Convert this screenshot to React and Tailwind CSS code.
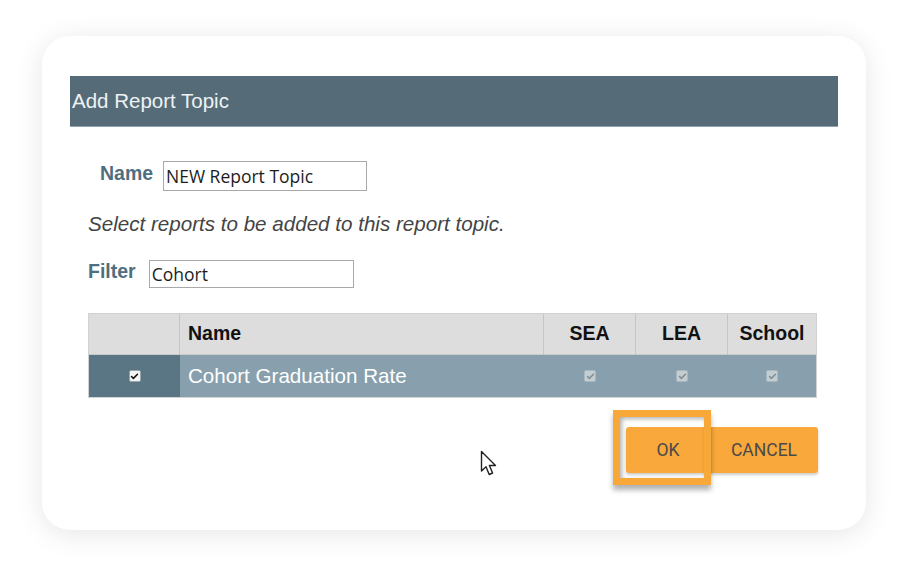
import { Check } from "lucide-react";

function Box({ on = true, disabled = false }) {
  // small native-looking checkbox
  return (
    <span
      className={`inline-flex w-[12px] h-[12px] items-center justify-center rounded-[2px] border ${
        disabled ? "bg-[#c3ced3] border-[#aab8be]" : "bg-[#f4f4f4] border-[#9aa6ac]"
      }`}
    >
      {on && (
        <Check
          strokeWidth={4}
          className={`w-[9px] h-[9px] ${disabled ? "text-[#7f8d94]" : "text-[#111]"}`}
        />
      )}
    </span>
  );
}

function Cursor() {
  return (
    <svg width="20" height="28" viewBox="0 0 20 28" className="absolute left-[480px] top-[450px]">
      <path
        d="M1.5 1.5 L1.5 21 L6 16.8 L9.2 24.5 L12.6 23 L9.4 15.5 L15.5 15.5 Z"
        fill="#fff"
        stroke="#222"
        strokeWidth="1.4"
        strokeLinejoin="round"
      />
    </svg>
  );
}

export default function App() {
  const cols = ["SEA", "LEA", "School"];

  return (
    <div className="w-[908px] h-[578px] bg-white pt-[36px] px-[42px] relative font-['Liberation_Sans',Arial,sans-serif]">
      <div className="h-[494px] bg-white rounded-[28px] shadow-[0_4px_28px_rgba(0,0,0,0.1)] pt-[40px] px-[28px]">
        {/* title bar */}
        <div className="h-[51px] bg-[#556c78] border-b border-[#8fa3ac] flex items-center pl-[2px]">
          <span className="text-[20.5px] text-[#eef2f4]">Add Report Topic</span>
        </div>

        <div className="pl-[18px] pr-[20px]">
          <div className="mt-[34px] pl-[12px] flex items-center gap-[8px]">
            <span className="w-[55px] text-[19.5px] font-bold text-[#4f6e7e] -mt-[4px]">Name</span>
            <div className="w-[204px] h-[30px] border border-[#a9a9a9] flex items-center pl-[2px] text-[17.5px] text-[#1d1d1d] font-['Open_Sans',sans-serif]">
              NEW Report Topic
            </div>
          </div>

          <p className="mt-[22px] h-[22px] leading-[22px] text-[20.6px] italic text-[#444]">
            Select reports to be added to this report topic.
          </p>

          <div className="mt-[25px] flex items-center gap-[13px]">
            <span className="text-[19.5px] font-bold text-[#4f6e7e] -mt-[4px]">Filter</span>
            <div className="w-[205px] h-[28px] border border-[#a9a9a9] flex items-center pl-[2px] text-[17.5px] text-[#1d1d1d] font-['Open_Sans',sans-serif]">
              Cohort
            </div>
          </div>

          {/* report table */}
          <div className="mt-[25px] w-[729px] border border-[#d2d2d2]">
            <div className="flex h-[40px] bg-[#dddddd] text-[19.5px] font-bold text-[#111]">
              <div className="w-[91px] border-r border-[#c6c6c6]" />
              <div className="w-[364px] border-r border-[#c6c6c6] flex items-center pl-[8px]">Name</div>
              {cols.map((c, i) => (
                <div
                  key={c}
                  className={`${i === 2 ? "flex-1" : "w-[92px] border-r border-[#c6c6c6]"} flex items-center justify-center`}
                >
                  {c}
                </div>
              ))}
            </div>
            <div className="flex h-[43px] bg-[#88a0ad] border-t border-[#c9c9c9]">
              <div className="w-[91px] bg-[#5a7584] flex items-center justify-center">
                <Box />
              </div>
              <div className="w-[364px] flex items-center pl-[8px] text-[20.6px] text-white">
                Cohort Graduation Rate
              </div>
              {cols.map((c, i) => (
                <div key={c} className={`${i === 2 ? "flex-1" : "w-[92px]"} flex items-center justify-center`}>
                  <Box disabled />
                </div>
              ))}
            </div>
          </div>

          {/* actions */}
          <div className="mt-[29px] flex justify-end font-['Roboto',sans-serif] text-[17.5px] text-[#4a4a4a]">
            <div className="relative">
              <div className="absolute -left-[13px] -top-[17px] w-[98px] h-[75px] border-[7px] border-[#f8a838] shadow-[0_5px_5px_rgba(0,0,0,0.3),inset_2px_2px_4px_rgba(0,0,0,0.3)] z-10" />
              <button className="w-[84px] h-[46px] bg-[#f9a83b] rounded-l-[3px] shadow-[0_2px_3px_rgba(0,0,0,0.2)]">OK</button>
            </div>
            <button className="w-[108px] h-[46px] bg-[#f9a83b] rounded-r-[3px] shadow-[0_2px_3px_rgba(0,0,0,0.2)]">CANCEL</button>
          </div>
        </div>
      </div>
      <Cursor />
    </div>
  );
}
